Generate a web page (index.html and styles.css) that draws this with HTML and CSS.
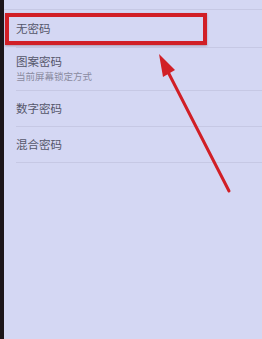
FILE: index.html
```html
<!DOCTYPE html>
<html lang="zh">
<head>
    <meta charset="UTF-8">
    <title>锁屏方式</title>
    <link rel="stylesheet" href="styles.css">
</head>
<body>
    <div class="bezel"></div>

    <!-- Lock type list -->
    <div class="screen">
        <div class="top-gap"></div>
        <div class="row row-first">
            <div class="row-title">无密码</div>
        </div>
        <div class="row row-tall">
            <div class="row-title">图案密码</div>
            <div class="row-sub">当前屏幕锁定方式</div>
        </div>
        <div class="row">
            <div class="row-title">数字密码</div>
        </div>
        <div class="row">
            <div class="row-title">混合密码</div>
        </div>
        <div class="row-end"></div>
    </div>

    <!-- Annotation -->
    <div class="mark-box"></div>
    <svg class="mark-arrow" width="262" height="339" viewBox="0 0 262 339">
        <line x1="229" y1="191" x2="166" y2="68" stroke="#d11f26" stroke-width="3" stroke-linecap="round"/>
        <polygon points="159,54 175,70 163,77" fill="#d11f26"/>
    </svg>
</body>
</html>
```

FILE: styles.css
```css
body {
    margin: 0;
    width: 262px;
    height: 339px;
    display: flex;
    background-color: #d4d7f3;
    font-family: "Noto Sans CJK SC", "Noto Sans", sans-serif;
    color: #55566a;
    overflow: hidden;
    position: relative;
}

.bezel {
    width: 4px;
    background-color: #1c1519;
}

.screen {
    flex: 1;
    display: flex;
    flex-direction: column;
}

.top-gap {
    height: 9px;
}

.row {
    height: 35px;
    border-top: 1px solid #c6c8e4;
    margin-left: 12px;
    display: flex;
    flex-direction: column;
    justify-content: center;
}

.row-first {
    height: 37px;
    margin-left: 0;
    padding-left: 12px;
}

.row-tall {
    height: 42px;
}

.row-title {
    font-size: 11.5px;
    line-height: 15px;
}

.row-sub {
    font-size: 9.5px;
    line-height: 15px;
    color: #8a8ba0;
}

.row-end {
    border-top: 1px solid #c6c8e4;
    margin-left: 12px;
}

/* Red annotation */
.mark-box {
    position: absolute;
    left: 5px;
    top: 13px;
    width: 194px;
    height: 24px;
    border: 4px solid #d11f26;
    box-shadow: 0 1px 2px rgba(80, 0, 0, 0.3);
}

.mark-arrow {
    position: absolute;
    left: 0;
    top: 0;
}
```
